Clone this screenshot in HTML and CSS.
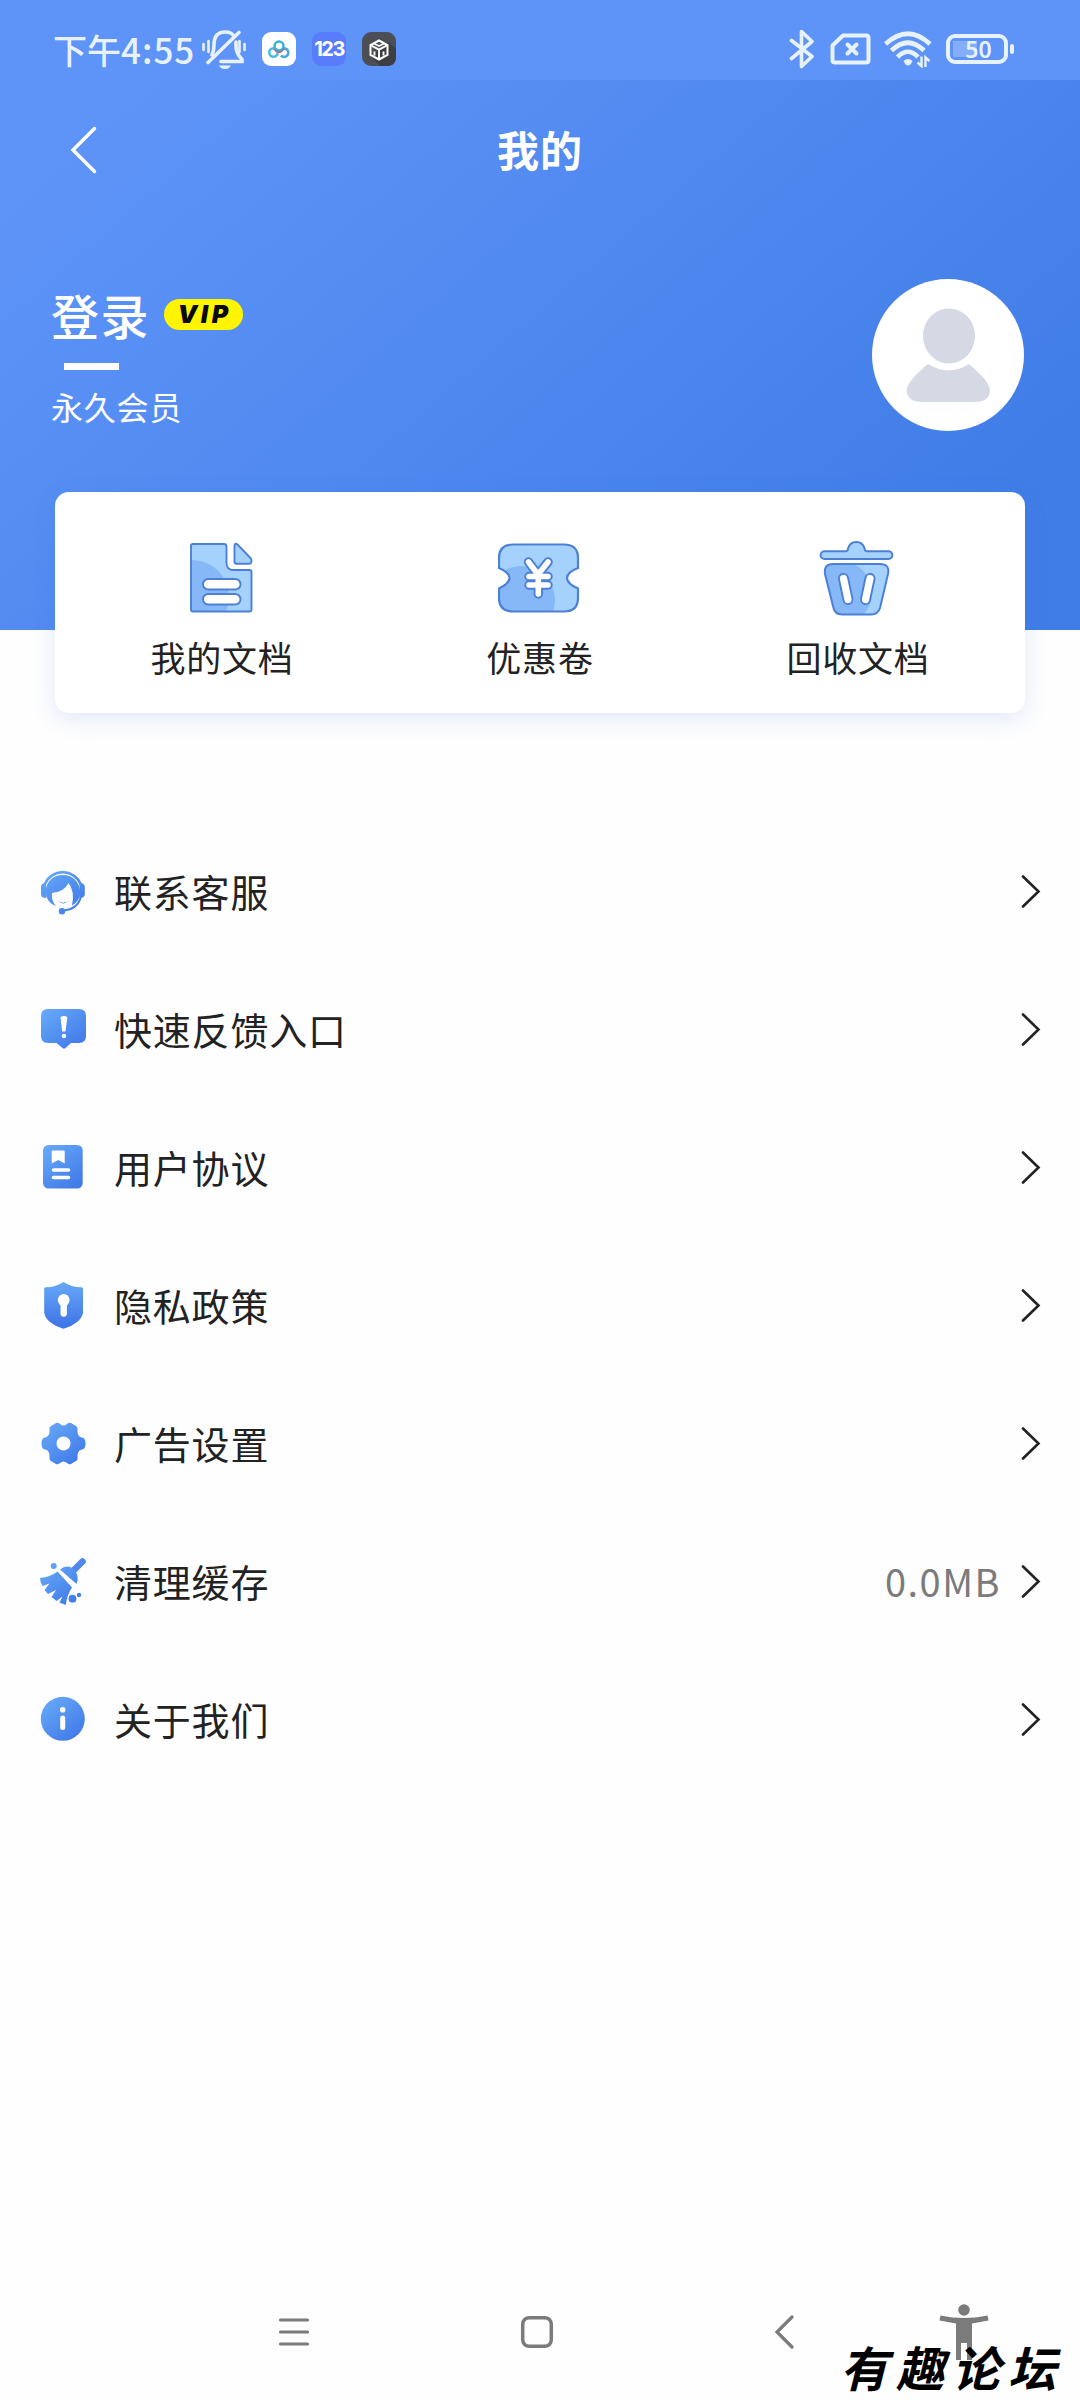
FILE: index.html
```html
<!DOCTYPE html>
<html lang="zh-CN">
<head>
<meta charset="utf-8">
<title>我的</title>
<link rel="stylesheet" href="styles.css">
</head>
<body>
<svg class="defs" width="0" height="0" aria-hidden="true">
  <defs>
    <linearGradient id="blue" gradientUnits="userSpaceOnUse" x1="6" y1="2" x2="42" y2="46">
      <stop offset="0" stop-color="#67abf9"/><stop offset="1" stop-color="#3e76e6"/>
    </linearGradient>
    <linearGradient id="blueDown" x1="0" y1="0" x2="0" y2="1">
      <stop offset="0" stop-color="#67a8f8"/><stop offset="1" stop-color="#3d72e6"/>
    </linearGradient>
    <clipPath id="docClip"><path d="M13 4H44q2.500 0 2.500 2.500V23q0 7 7 7H69.500q2 0 2 2V69.500q0 2-2 2H13q-2 0-2-2V6q0-2 2-2z"/></clipPath>
    <clipPath id="ticketClip"><path id="ticketShape" d="M15 4.500H66Q80 4.500 80 18V28C72 31 69 34 69 38S72 45 80 48.500V58Q80 71.500 66 71.500H15Q1 71.500 1 58V48.500C8 45 11.500 42 11.500 38S8 31 1 28V18Q1 4.500 15 4.500z"/></clipPath>
    <clipPath id="binClip"><path id="binShape" d="M17 24H64Q74 24 72 34L64 68Q62 74.500 55 74.500H26Q19 74.500 17.500 68L9 34Q7.500 24 17 24z"/></clipPath>
  </defs>
</svg>
<div class="screen">
  <header class="status">
    <div class="status-left">
      <span class="clock">下午<span class="digits">4:55</span></span>
      <svg class="bell" width="46" height="42" viewBox="0 0 46 42" fill="none" stroke="#e8f2fe" stroke-linecap="round">
        <path d="M11 27q2-4 2-10Q13 4 24 4q6 0 8 3M35 14v5q0 6 6 12.500v2H20" stroke-width="3.600"/>
        <path d="M7 34.500L38 4.500" stroke-width="3.600"/>
        <path d="M2.500 16v6M7.500 13v11M43.500 16v6M38.500 13v11" stroke-width="2.600"/>
        <path d="M18 37.500h12q-2 3.500-6 3.500t-6-3.500z" fill="#e8f2fe" stroke="none"/>
      </svg>
      <svg width="34" height="34" viewBox="0 0 34 34" fill="none">
        <rect width="34" height="34" rx="9" fill="#fff"/>
        <circle cx="11.500" cy="20.500" r="4.200" stroke="#45bfe0" stroke-width="2.600"/>
        <path d="M19 23.500a4.200 4.200 0 1 0 1-6.500" stroke="#45a9e0" stroke-width="2.600"/>
        <path d="M12.500 16.500q3 4.500 6.500 2.500l3-3" stroke="#e0516b" stroke-width="2.800"/>
        <circle cx="17" cy="14" r="4.500" stroke="#32b1d6" stroke-width="2.400"/>
      </svg>
      <span class="app-num">123</span>
      <svg width="34" height="34" viewBox="0 0 34 34" fill="none">
        <rect width="34" height="34" rx="9" fill="#4b4f55"/>
        <path d="M9 24l9 10h7q9 0 9-9v-8l-8-7z" fill="#3c3e42"/>
        <path d="M17 8.500l8.500 4.700v9.600L17 27.500l-8.500-4.700v-9.600z" stroke="#fff" stroke-width="2"/>
        <path d="M8.500 13.200l8.500 4.500 8.500-4.500M17 17.700v9.500M12 11.500l5 2.500 5-2.500M12.500 19.500v4M21.500 19.500v4" stroke="#fff" stroke-width="1.900"/>
      </svg>
    </div>
    <div class="status-right">
      <svg width="26" height="40" viewBox="0 0 26 40" fill="none" stroke="#e8f2fe" stroke-width="3.600" stroke-linecap="round" stroke-linejoin="round">
        <path d="M2.500 11.500L23 27.500 12.500 37.500V2.500L23 12.500 2.500 29.500"/>
      </svg>
      <svg width="41" height="32" viewBox="0 0 41 32" fill="none" stroke="#e8f2fe" stroke-linecap="round" stroke-linejoin="round">
        <path d="M13 2.500H36Q38.500 2.500 38.500 5V27Q38.500 29.500 36 29.500H5Q2.500 29.500 2.500 27V12.500z" stroke-width="4"/>
        <path d="M17.500 11.500l9 9M26.500 11.500l-9 9" stroke-width="4"/>
      </svg>
      <svg class="wifi" width="48" height="38" viewBox="0 0 48 38" fill="none" stroke="#e8f2fe" stroke-width="4.600">
        <path d="M1.500 14Q24-6.500 46 14M7.500 20.500Q24 5 40 20.500M13.500 27Q24 16.500 34 27"/>
        <path d="M19.500 31q4.500-4 9 0q-2 4.500-4.500 4.500t-4.500-4.500z" fill="#e8f2fe" stroke="none"/>
        <path d="M37.500 26.500v9.500l-4-3.500M41.500 37v-9.500l4 3.500" stroke-width="2.400"/>
      </svg>
      <div class="battery"><span class="battery-body"><span class="battery-text">50</span></span><span class="battery-nub"></span></div>
    </div>
  </header>

  <section class="hero">
    <div class="title-bar">
      <svg class="back" width="30" height="50" viewBox="0 0 30 50" fill="none" stroke="#fff" stroke-width="3.400" stroke-linecap="round"><path d="M25.500 3.500L4 25 25.500 46.500"/></svg>
      <h1>我的</h1>
    </div>
    <div class="profile">
      <div class="who">
        <div class="name-row"><span class="name">登录</span><span class="vip">VIP</span></div>
        <div class="dash"></div>
        <div class="member">永久会员</div>
      </div>
      <svg width="152" height="152" viewBox="0 0 152 152">
        <circle cx="76" cy="76" r="76" fill="#fff"/>
        <ellipse cx="77" cy="57" rx="26" ry="27.500" fill="#d4d9e4"/>
        <path d="M56 85Q77 98 97 85L110 97Q118 106 118 112Q117 123 103 123H50Q36 123 34.500 112Q35 102 56 85z" fill="#d4d9e4"/>
      </svg>
    </div>
  </section>

  <nav class="card">
    <a class="tile">
      <svg width="84" height="80" viewBox="0 0 84 80">
        <g clip-path="url(#docClip)"><rect width="84" height="80" fill="#a5d2fd"/><circle cx="12" cy="57" r="37" fill="#86b8f7"/></g>
        <g fill="none" stroke="#4c80d7" stroke-width="1.900">
          <path d="M13 4H44q2.500 0 2.500 2.500V23q0 7 7 7H69.500q2 0 2 2V69.500q0 2-2 2H13q-2 0-2-2V6q0-2 2-2z"/>
          <path d="M54.500 6q0-3.500 3-1.500L71 18.500q1.500 5-2 5.300H56.500q-2 0-2-2z" fill="#a5d2fd"/>
          <rect x="23" y="39" width="37.500" height="10.500" rx="5.250" fill="#fff"/>
          <rect x="23" y="54" width="37.500" height="10.500" rx="5.250" fill="#fff"/>
        </g>
      </svg>
      <span>我的文档</span>
    </a>
    <a class="tile">
      <svg width="84" height="80" viewBox="0 0 84 80">
        <g clip-path="url(#ticketClip)"><rect width="84" height="80" fill="#a5d2fd"/><circle cx="23" cy="60" r="34" fill="#86b8f7"/></g>
        <use href="#ticketShape" fill="none" stroke="#4c80d7" stroke-width="2.200"/>
        <g fill="none" stroke-linecap="round" stroke-linejoin="round">
          <path d="M30.500 22L40 34.500 50 22M31 36.500H50M31 45H50M40.300 35V54" stroke="#4c80d7" stroke-width="9.500"/>
          <path d="M30.500 22L40 34.500 50 22M31 36.500H50M31 45H50M40.300 35V54" stroke="#fff" stroke-width="5.600"/>
        </g>
      </svg>
      <span>优惠卷</span>
    </a>
    <a class="tile">
      <svg width="84" height="80" viewBox="0 0 84 80">
        <g clip-path="url(#binClip)"><rect width="84" height="80" fill="#a5d2fd"/><circle cx="24" cy="53" r="32" fill="#86b8f7"/></g>
        <use href="#binShape" fill="none" stroke="#4c80d7" stroke-width="2"/>
        <path d="M8.500 11.200H30Q32 11 32 8.500Q34 2 40.300 2T48.600 8.500Q48.600 11 50.500 11.200H72.500a3.800 3.800 0 0 1 0 7.800H8.500a3.800 3.800 0 0 1 0-7.800z" fill="#a5d2fd" stroke="#4c80d7" stroke-width="2"/>
        <g fill="none" stroke-linecap="round">
          <path d="M27.500 38.500L32 59.500M54 38.500L49.500 59.500" stroke="#4c80d7" stroke-width="11"/>
          <path d="M27.500 38.500L32 59.500M54 38.500L49.500 59.500" stroke="#fff" stroke-width="7.200"/>
        </g>
      </svg>
      <span>回收文档</span>
    </a>
  </nav>

  <ul class="menu">
    <li>
      <svg width="48" height="48" viewBox="0 0 48 48" fill="none">
        <path d="M5 20A19.300 19.300 0 0 1 42.500 20" stroke="url(#blue)" stroke-width="2.600"/>
        <path d="M7 16v15Q2 31 2 27V20Q2 16 7 16zM40.500 16v15Q45.800 31 45.800 27V20Q45.800 16 40.500 16z" fill="url(#blue)"/>
        <path d="M6 25Q9 8 23.800 8T41.500 25Q41 34 33 38.500Q36 24 29.500 16Q25 25 13 26Q12 34 17 39Q8 36 6 25z" fill="url(#blue)"/>
        <path d="M19.500 34q4.500 3.500 9 0q-4 5-9 0z" fill="url(#blue)"/>
        <path d="M42 29Q39 42.500 24 43.500" stroke="url(#blue)" stroke-width="2"/>
        <circle cx="23" cy="44.300" r="3.200" fill="#4b86ec"/>
      </svg>
      <span class="label">联系客服</span>
      <svg class="chev" width="20" height="34" viewBox="0 0 20 34"><path d="M2 2.500L17.500 17.500 2 32.500"/></svg>
    </li>
    <li>
      <svg width="48" height="48" viewBox="0 0 48 48">
        <path d="M9 4H40Q47 4 47 11V31Q47 38 40 38H32L26.500 43q-1.500 1.500-3 0L17.500 38H9Q2 38 2 31V11Q2 4 9 4z" fill="url(#blue)"/>
        <path d="M21.500 12q3.300-2 6.800 0L26.500 26.500h-3.300z" fill="#fff"/><circle cx="24.900" cy="31" r="2.300" fill="#fff"/>
      </svg>
      <span class="label">快速反馈入口</span>
      <svg class="chev" width="20" height="34" viewBox="0 0 20 34"><path d="M2 2.500L17.500 17.500 2 32.500"/></svg>
    </li>
    <li>
      <svg width="48" height="48" viewBox="0 0 48 48">
        <rect x="4" y="2" width="39.700" height="43.500" rx="5.500" fill="url(#blue)"/>
        <path d="M12.700 8.500q0-1 1-1h11q1 0 1 1v12l-6.500-3.500-6.500 3.500z" fill="#fff"/>
        <path d="M14.500 27H29.500M14.500 34.500H29.500" stroke="#fff" stroke-width="3.600" stroke-linecap="round"/>
      </svg>
      <span class="label">用户协议</span>
      <svg class="chev" width="20" height="34" viewBox="0 0 20 34"><path d="M2 2.500L17.500 17.500 2 32.500"/></svg>
    </li>
    <li>
      <svg width="48" height="48" viewBox="0 0 48 48">
        <path d="M24.500 1Q33 6.500 42.500 6.300q1.500 0 1.500 1.500V32Q42 42 24.500 47.800Q7 42 5.200 32V7.800q0-1.500 1.500-1.500Q16 6.500 24.500 1z" fill="url(#blueDown)"/>
        <circle cx="24.700" cy="19" r="5.900" fill="#fff"/><path d="M24.700 20V32.500" stroke="#fff" stroke-width="6.400" stroke-linecap="round"/>
      </svg>
      <span class="label">隐私政策</span>
      <svg class="chev" width="20" height="34" viewBox="0 0 20 34"><path d="M2 2.500L17.500 17.500 2 32.500"/></svg>
    </li>
    <li>
      <svg width="48" height="48" viewBox="0 0 48 48">
        <path fill-rule="evenodd" d="M17 4Q19 3 21 5Q24.500 8 28 5Q30 3 32 4L37 7Q39 8 38.500 11Q38 17.500 43 18.500Q46.500 19 46.500 24.500T43 30.500Q38 31.500 38.500 38Q39 41 37 42L32 45Q30 46 28 44Q24.500 41 21 44Q19 46 17 45L12 42Q10 41 10.500 38Q11 31.500 6 30.500Q2.500 30 2.500 24.500T6 18.500Q11 17.500 10.500 11Q10 8 12 7zM24.500 17.500a7 7 0 1 0 .01 0z" fill="url(#blue)"/>
      </svg>
      <span class="label">广告设置</span>
      <svg class="chev" width="20" height="34" viewBox="0 0 20 34"><path d="M2 2.500L17.500 17.500 2 32.500"/></svg>
    </li>
    <li>
      <svg width="48" height="48" viewBox="0 0 48 48" fill="url(#blue)">
        <path d="M33 15L43.500 4.500" stroke="#5089ec" stroke-width="6.600" stroke-linecap="round"/>
        <path d="M21 12.500Q28 7 34.500 12Q41 19 37.500 27z"/>
        <path d="M18.500 14.500L33 30.500Q28 38 26.700 48L20.500 45.500 23.500 39.500 17.500 44 12.500 40 17 33 9 37 5.500 33 10.500 26.500 3.500 29Q1 25 1 21Q11 20 18.500 14.500z"/>
        <circle cx="14.700" cy="9" r="3"/><circle cx="33.500" cy="41.700" r="3.900"/><circle cx="40" cy="38" r="2.200"/>
      </svg>
      <span class="label">清理缓存</span>
      <span class="value">0.0MB</span>
      <svg class="chev" width="20" height="34" viewBox="0 0 20 34"><path d="M2 2.500L17.500 17.500 2 32.500"/></svg>
    </li>
    <li>
      <svg width="48" height="48" viewBox="0 0 48 48">
        <circle cx="23.800" cy="23.800" r="22" fill="url(#blue)"/>
        <circle cx="23.700" cy="14.800" r="2.800" fill="#fff"/><path d="M23.700 23V32.500" stroke="#fff" stroke-width="5" stroke-linecap="round"/>
      </svg>
      <span class="label">关于我们</span>
      <svg class="chev" width="20" height="34" viewBox="0 0 20 34"><path d="M2 2.500L17.500 17.500 2 32.500"/></svg>
    </li>
  </ul>

  <footer class="navbar">
    <svg width="34" height="34" viewBox="0 0 34 34" fill="none" stroke="#7b7b7b" stroke-width="3.200" stroke-linecap="round"><path d="M3.500 5H30.500M3.500 17H30.500M3.500 29H30.500"/></svg>
    <svg width="34" height="34" viewBox="0 0 34 34" fill="none" stroke="#7b7b7b" stroke-width="3.500"><rect x="2.700" y="2.700" width="28.600" height="28.600" rx="6.500"/></svg>
    <svg width="34" height="34" viewBox="0 0 34 34" fill="none" stroke="#7b7b7b" stroke-width="3.200" stroke-linecap="round"><path d="M26 2L11 17 26 32"/></svg>
    <svg class="person" width="50" height="58" viewBox="0 0 50 58" fill="#7b7b7b">
      <circle cx="25" cy="6" r="5.800"/>
      <path d="M1.500 11.500Q25 16.500 48.500 11.500L49.500 16.500 33 19.500V56H28V39H22V56H17V19.500L.5 16.500z"/>
    </svg>
  </footer>
  <div class="watermark">有趣论坛</div>
</div>
</body>
</html>
```
FILE: styles.css
```css
* { box-sizing: border-box; }
body {
  margin: 0;
  background: #fff;
  color: #222;
  font-family: "Noto Sans CJK SC", sans-serif;
}
svg { display: block; flex: none; }
.defs { position: absolute; }
.screen {
  position: relative;
  width: 1080px;
  height: 2400px;
  display: flex;
  flex-direction: column;
  overflow: hidden;
  background: #fefefe;
}

/* Status bar */
.status {
  height: 80px;
  padding: 18px 66px 0 53px;
  display: flex;
  justify-content: space-between;
  background: #5e94f8;
  color: #e8f2fe;
}
.status-left { display: flex; align-items: center; height: 62px; }
.clock {
  width: 148px;
  font-size: 34px;
  line-height: 62px;
  font-weight: 500;
  white-space: nowrap;
}
.digits { font-size: 35px; letter-spacing: 1px; }
.bell { margin-right: 15px; }
.app-num {
  width: 34px;
  height: 34px;
  margin: 0 16px;
  border-radius: 9px;
  background: #587cfb;
  color: #fff;
  font: 700 20px/34px "Inter", sans-serif;
  letter-spacing: -1.5px;
  text-align: center;
}
.status-right { display: flex; align-items: center; height: 62px; gap: 15px; }
.wifi { margin-left: -2px; }
.battery { display: flex; align-items: center; gap: 2px; margin-left: -1px; }
.battery-body {
  width: 62px;
  height: 30px;
  border: 4px solid #e8f2fe;
  border-radius: 9px;
  display: flex;
  align-items: center;
  justify-content: center;
  background: linear-gradient(#85aefa, #85aefa) 3px 3px / 24px 16px no-repeat;
}
.battery-text { font: 600 23px/22px "Noto Sans", sans-serif; padding-left: 3px; }
.battery-nub { width: 4px; height: 10px; border-radius: 2px; background: #e8f2fe; }

/* Header */
.hero {
  height: 550px;
  color: #fff;
  background: linear-gradient(139deg, #5e94f8 8%, #417de7 86%);
}
.title-bar {
  height: 140px;
  display: grid;
  grid-template-columns: 1fr auto 1fr;
  align-items: center;
}
.back { margin-left: 69px; }
.title-bar h1 {
  margin: 0 0 3px;
  font-size: 42px;
  line-height: 60px;
  font-weight: 600;
  letter-spacing: 1px;
}
.profile {
  display: flex;
  justify-content: space-between;
  padding: 59px 56px 0 51px;
}
.who { padding-top: 4px; }
.name-row { display: flex; align-items: center; height: 64px; }
.name { margin-bottom: 2px; font-size: 48px; line-height: 64px; font-weight: 500; letter-spacing: 1.500px; }
.vip {
  width: 79px;
  height: 31px;
  margin: 0 0 2px 14px;
  border-radius: 16px;
  background: #fff500;
  color: #0a0a0a;
  font: italic 900 25px/31px "Inter", sans-serif;
  letter-spacing: 3.500px;
  padding-left: 2px;
  text-align: center;
}
.dash { width: 55px; height: 7px; margin: 16px 0 0 13px; background: #fff; }
.member { margin-top: 13px; font-size: 32px; line-height: 46px; letter-spacing: 0.800px; }

/* Shortcut card */
.card {
  width: 970px;
  height: 221px;
  margin: -138px auto 0;
  padding: 48px 8px 0;
  display: grid;
  grid-template-columns: repeat(3, 1fr);
  border-radius: 14px;
  background: #fff;
  box-shadow: 0 6px 22px rgba(70, 120, 220, 0.16);
}
.tile { display: flex; flex-direction: column; align-items: center; }
.tile span { margin-top: 11px; font-size: 35px; line-height: 52px; letter-spacing: 0.800px; }

/* Settings list */
.menu { list-style: none; margin: 109px 0 0; padding: 0 39px; }
.menu li { display: flex; align-items: center; height: 138px; }
.label { margin: 0 auto 0 27px; font-size: 38px; line-height: 56px; letter-spacing: 0.800px; }
.value { margin-right: 20px; font-size: 38px; line-height: 56px; letter-spacing: 1.500px; color: #7b7b7b; }
.chev { fill: none; stroke: #222; stroke-width: 2.600; stroke-linecap: round; }

/* System navigation */
.navbar {
  margin-top: auto;
  height: 136px;
  display: grid;
  grid-template-columns: 277px 243px 246px 173px auto;
}
.navbar svg { grid-row: 1; margin-top: 51px; }
.navbar svg:nth-child(1) { grid-column: 2; }
.navbar svg:nth-child(2) { grid-column: 3; }
.navbar svg:nth-child(3) { grid-column: 4; }
.navbar .person { grid-column: 5; margin-top: 40px; }
.watermark {
  position: absolute;
  left: 840px;
  top: 2331px;
  font-size: 48px;
  line-height: 70px;
  font-weight: 700;
  font-style: italic;
  letter-spacing: 8px;
  color: #000;
  white-space: nowrap;
}
```
